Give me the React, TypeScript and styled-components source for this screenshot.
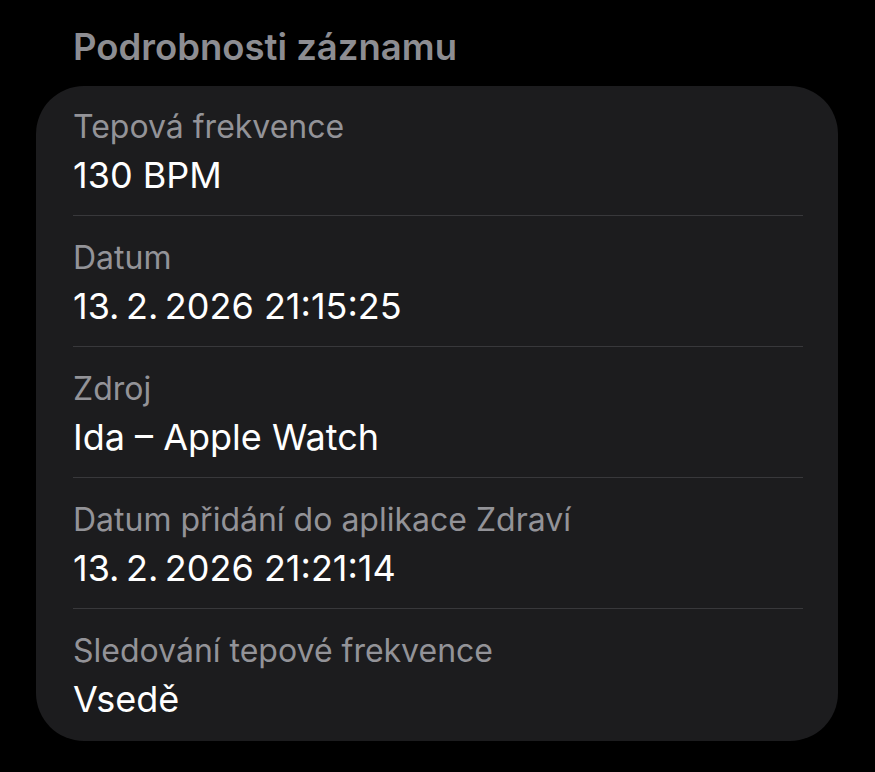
import React from 'react';
import styled, { createGlobalStyle } from 'styled-components';

const GlobalStyle = createGlobalStyle`
  html, body {
    margin: 0;
    padding: 0;
    background: #000;
  }
  body {
    font-family: Inter, "Noto Sans", "Liberation Sans", sans-serif;
    -webkit-font-smoothing: antialiased;
  }
`;

const rows = [
  { label: 'Tepová frekvence', value: '130 BPM' },
  { label: 'Datum', value: '13.\u202F2.\u202F2026 21:15:25' },
  { label: 'Zdroj', value: 'Ida – Apple Watch' },
  { label: 'Datum přidání do aplikace Zdraví', value: '13.\u202F2.\u202F2026 21:21:14' },
  { label: 'Sledování tepové frekvence', value: 'Vsedě' },
];

export default function App() {
  return (
    <Page>
      <GlobalStyle />
      <Title>Podrobnosti záznamu</Title>
      <Card>
        {rows.map((row, i) => (
          <Row key={row.label} last={i === rows.length - 1}>
            <Label>{row.label}</Label>
            <Value>{row.value}</Value>
          </Row>
        ))}
      </Card>
    </Page>
  );
}

const Page = styled.div`
  width: 875px;
  height: 772px;
  background: #000;
  padding: 26px 0 0 36px;
  box-sizing: border-box;
`;

const Title = styled.div`
  padding-left: 37px;
  height: 60px;
  font-size: 36.5px;
  line-height: 42px;
  font-weight: 600;
  color: #8d8d92;
`;

const Card = styled.div`
  width: 802px;
  box-sizing: border-box;
  background: #1c1c1e;
  border-radius: 48px;
  padding: 21px 35px 1px 37px;
`;

const Row = styled.div<{ last?: boolean }>`
  display: flex;
  flex-direction: column;
  gap: 6px;
  padding: 0 0 ${({ last }) => (last ? '19px' : '18px')};
  margin-bottom: ${({ last }) => (last ? '0' : '22px')};
  border-bottom: ${({ last }) => (last ? 'none' : '1.5px solid #38383b')};
`;

const Label = styled.div`
  font-size: 32px;
  line-height: 40px;
  color: #939398;
  white-space: nowrap;
`;

const Value = styled.div`
  font-size: 36px;
  line-height: 44px;
  color: #fff;
  white-space: nowrap;
`;
